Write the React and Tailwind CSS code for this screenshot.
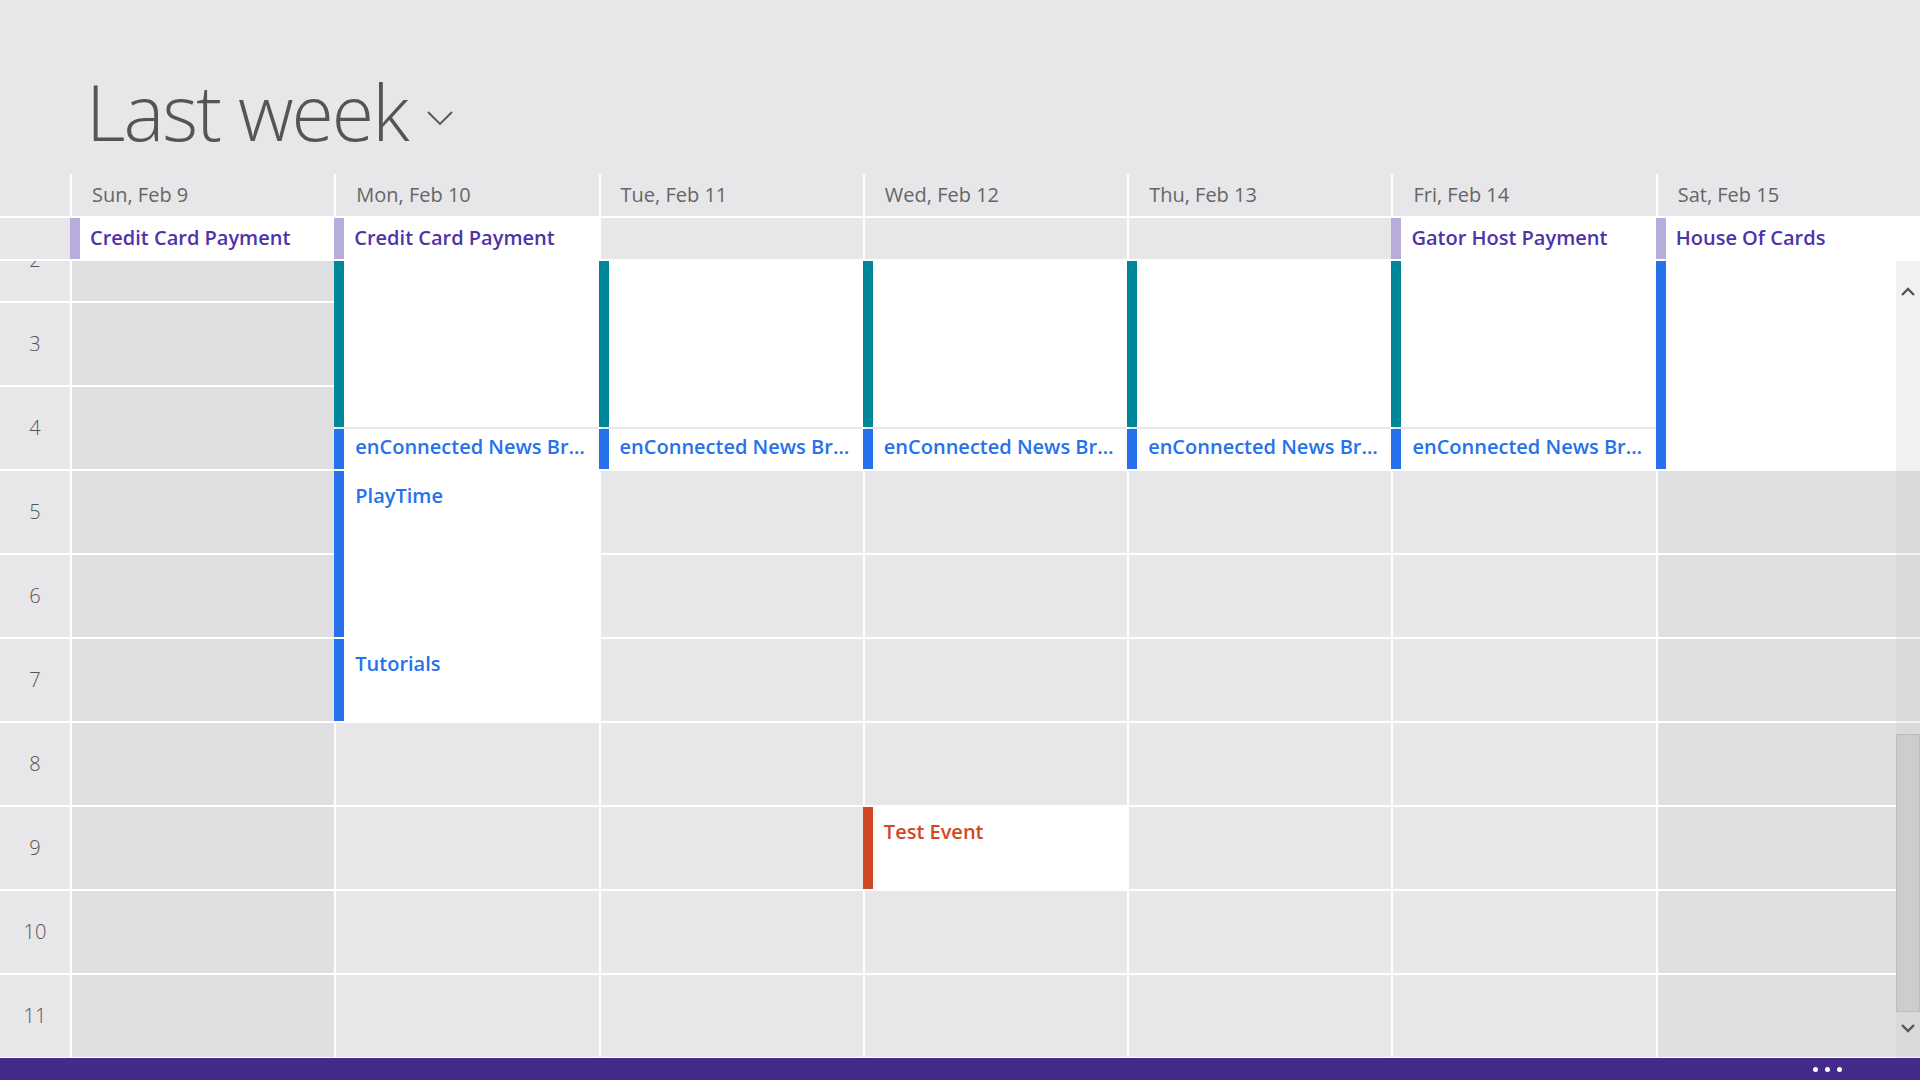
import React from "react";

const ROW = 84;
const FIRST_HOUR = 2;
const HOURS = [2, 3, 4, 5, 6, 7, 8, 9, 10, 11];

const COLORS = {
  teal: { bar: "bg-[#00879a]", text: "text-[#00879a]" },
  blue: { bar: "bg-[#2672ec]", text: "text-[#2672ec]" },
  red: { bar: "bg-[#d24726]", text: "text-[#d24726]" },
};

const news = { start: 4.5, end: 5, color: "blue", title: "enConnected News Briefing" };
const morning = { start: 1, end: 4.5, color: "teal", title: "" };

const days = [
  { label: "Sun, Feb 9", weekend: true, allDay: "Credit Card Payment", events: [] },
  {
    label: "Mon, Feb 10",
    allDay: "Credit Card Payment",
    events: [
      morning,
      news,
      { start: 5, end: 7, color: "blue", title: "PlayTime" },
      { start: 7, end: 8, color: "blue", title: "Tutorials" },
    ],
  },
  { label: "Tue, Feb 11", events: [morning, news] },
  { label: "Wed, Feb 12", events: [morning, news, { start: 9, end: 10, color: "red", title: "Test Event" }] },
  { label: "Thu, Feb 13", events: [morning, news] },
  { label: "Fri, Feb 14", allDay: "Gator Host Payment", events: [morning, news] },
  { label: "Sat, Feb 15", weekend: true, allDay: "House Of Cards", events: [{ start: 1, end: 5, color: "blue", title: "" }] },
];

const Chevron = ({ up, className = "" }) => (
  <svg width="14" height="9" viewBox="0 0 14 9" className={className}>
    <polyline
      points={up ? "1,8 7,2 13,8" : "1,1 7,7 13,1"}
      fill="none"
      stroke="#555"
      strokeWidth="2.4"
    />
  </svg>
);

const TimedEvent = ({ ev }) => {
  const top = (ev.start - FIRST_HOUR) * ROW;
  const height = (ev.end - ev.start) * ROW - 2;
  const short = height <= 42;
  return (
    <div className="absolute left-[-2px] right-0 flex bg-white" style={{ top, height }}>
      <div className={`w-[10px] shrink-0 ${COLORS[ev.color].bar}`} />
      <div
        className={`min-w-0 flex-1 truncate pl-[11px] pr-[9px] text-[20px] leading-[24px] font-semibold ${COLORS[ev.color].text} ${short ? "pt-[6px]" : "pt-[13px]"}`}
      >
        {ev.title}
      </div>
    </div>
  );
};

export default function App() {
  return (
    <div className="relative flex h-[1080px] w-[1920px] flex-col overflow-hidden bg-[#e7e7e9] font-['Open_Sans','Noto_Sans',sans-serif]">
      {/* title */}
      <div className="flex h-[174px] shrink-0 items-start pl-[86px] pt-[73px]">
        <h1 className="text-[77px] leading-[77px] font-light tracking-[-2px] text-[#555]">Last week</h1>
        <svg width="28" height="18" viewBox="0 0 28 18" className="ml-[19px] mt-[37px]">
          <polyline points="2,2 14,14 26,2" fill="none" stroke="#555" strokeWidth="1.8" />
        </svg>
      </div>

      {/* day headers */}
      <div className="grid h-[44px] shrink-0 grid-cols-[70px_repeat(7,minmax(0,1fr))] border-b-2 border-white">
        <div />
        {days.map((d) => (
          <div key={d.label} className="border-l-2 border-white pl-[20px] pt-[9px] text-[20px] leading-[24px] text-[#666]">
            {d.label}
          </div>
        ))}
      </div>

      {/* all day row */}
      <div className="grid h-[43px] shrink-0 grid-cols-[70px_repeat(7,minmax(0,1fr))]">
        <div className="border-b-2 border-white" />
        {days.map((d) => (
          <div key={d.label} className="relative border-b-2 border-l-2 border-white">
            {d.allDay && (
              <div className="absolute inset-y-0 left-[-2px] right-0 flex bg-white">
                <div className="w-[10px] shrink-0 bg-[#b8acdc]" />
                <div className="min-w-0 flex-1 truncate pl-[10px] pt-[8px] text-[20px] leading-[24px] font-semibold text-[#4e33a8]">
                  {d.allDay}
                </div>
              </div>
            )}
          </div>
        ))}
      </div>

      {/* hour grid, scrolled */}
      <div className="relative h-[797px] shrink-0 overflow-hidden">
        <div className="mt-[-42px] grid grid-cols-[70px_repeat(7,minmax(0,1fr))]">
          <div>
            {HOURS.map((h) => (
              <div key={h} className="flex h-[84px] items-center justify-center border-b-2 border-white text-[20px] font-light text-[#555]">
                {h}
              </div>
            ))}
          </div>
          {days.map((d) => (
            <div key={d.label} className="relative border-l-2 border-white">
              {HOURS.map((h) => (
                <div key={h} className={`h-[84px] border-b-2 border-white ${d.weekend ? "bg-[#dfdfe1]" : "bg-[#e7e7e9]"}`} />
              ))}
              {d.events.map((ev, i) => (
                <TimedEvent key={i} ev={ev} />
              ))}
            </div>
          ))}
        </div>

        {/* scrollbar */}
        <div className="absolute inset-y-0 right-0 flex w-[24px] flex-col bg-[#d0d0d0]/30">
          <div className="flex h-[60px] shrink-0 items-center justify-center">
            <Chevron up />
          </div>
          <div className="min-h-0 flex-1">
            <div className="mt-[413px] h-[278px] border border-[#bcbcbc] bg-[#cdcdcd]" />
          </div>
          <div className="flex h-[46px] shrink-0 justify-center pt-[12px]">
            <Chevron />
          </div>
        </div>
      </div>

      {/* app bar */}
      <div className="flex h-[22px] shrink-0 items-center justify-end gap-[7px] bg-[#452a8a] pr-[78px]">
        <span className="h-[5px] w-[5px] rounded-full bg-white" />
        <span className="h-[5px] w-[5px] rounded-full bg-white" />
        <span className="h-[5px] w-[5px] rounded-full bg-white" />
      </div>
    </div>
  );
}
